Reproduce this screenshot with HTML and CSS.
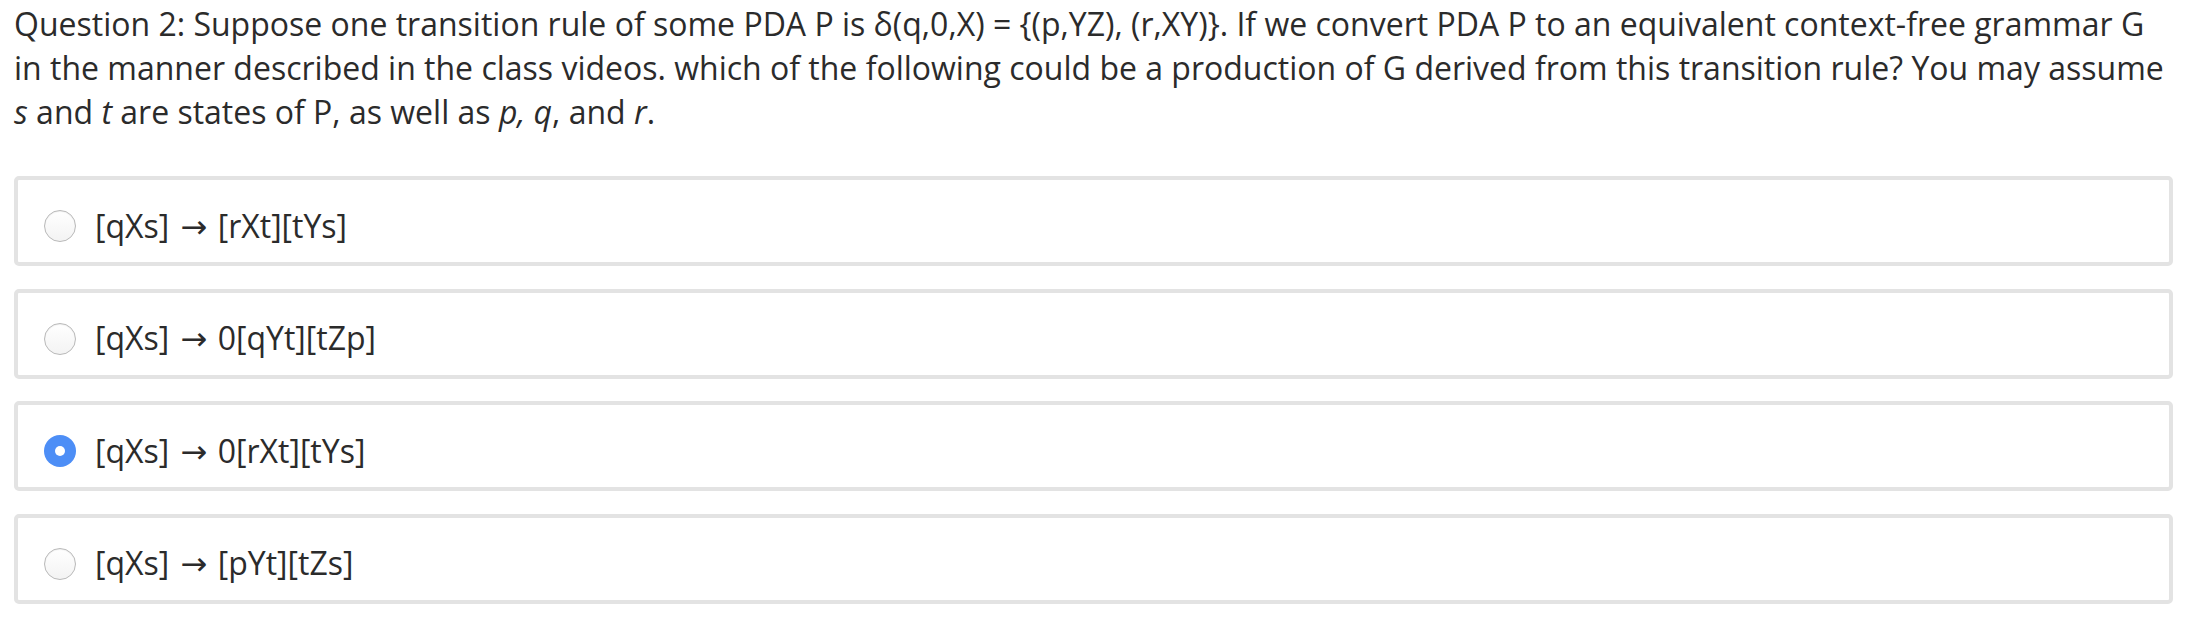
FILE: index.html
```html
<!DOCTYPE html>
<html lang="en">
<head>
<meta charset="utf-8">
<title>Question 2</title>
<link rel="stylesheet" href="styles.css">
</head>
<body>
<div class="quiz">
  <p class="question">Question 2: Suppose one transition rule of some PDA P is δ(q,0,X) = {(p,YZ), (r,XY)}. If we convert PDA P to an equivalent context-free grammar G in the manner described in the class videos. which of the following could be a production of G derived from this transition rule? You may assume <i>s</i> and <i>t</i> are states of P, as well as <i>p, q</i>, and <i>r</i>.</p>
  <div class="options">
    <label class="option"><span class="radio"></span><span class="label">[qXs] <span class="arrow">→</span> [rXt][tYs]</span></label>
    <label class="option"><span class="radio"></span><span class="label">[qXs] <span class="arrow">→</span> 0[qYt][tZp]</span></label>
    <label class="option"><span class="radio checked"></span><span class="label">[qXs] <span class="arrow">→</span> 0[rXt][tYs]</span></label>
    <label class="option"><span class="radio"></span><span class="label">[qXs] <span class="arrow">→</span> [pYt][tZs]</span></label>
  </div>
</div>
</body>
</html>
```
FILE: styles.css
```css
html, body {
  margin: 0;
  padding: 0;
  background: #ffffff;
}

body {
  font-family: "Open Sans", "Liberation Sans", sans-serif;
  color: #2b2b2b;
}

.quiz {
  padding: 2px 13px 0 14px;
}

.question {
  margin: 0;
  font-size: 32px;
  line-height: 44px;
}

.question i {
  font-style: italic;
}

.options {
  margin-top: 42px;
  display: flex;
  flex-direction: column;
  gap: 22.5px;
}

.option {
  box-sizing: border-box;
  height: 90px;
  border: 4px solid #e3e3e3;
  border-radius: 5px;
  display: flex;
  align-items: center;
  padding: 10px 0 0 26px;
  background: #ffffff;
}

.radio {
  box-sizing: border-box;
  width: 32px;
  height: 32px;
  border-radius: 50%;
  border: 1px solid #b9b9b9;
  background: linear-gradient(#ffffff, #f3f3f3);
  box-shadow: inset 0 1px 1px rgba(0, 0, 0, 0.06);
  flex: none;
  position: relative;
}

.radio.checked {
  border: none;
  background: #4d8ef6;
  box-shadow: none;
}

.radio.checked::after {
  content: "";
  position: absolute;
  left: 11px;
  top: 11px;
  width: 10px;
  height: 10px;
  border-radius: 50%;
  background: #ffffff;
}

.label {
  margin-left: 19px;
  font-size: 32px;
  line-height: 44px;
  white-space: nowrap;
}

.arrow {
  font-family: "DejaVu Sans", sans-serif;
  font-size: 32px;
  margin-left: 3px;
  margin-right: 2px;
}
```
